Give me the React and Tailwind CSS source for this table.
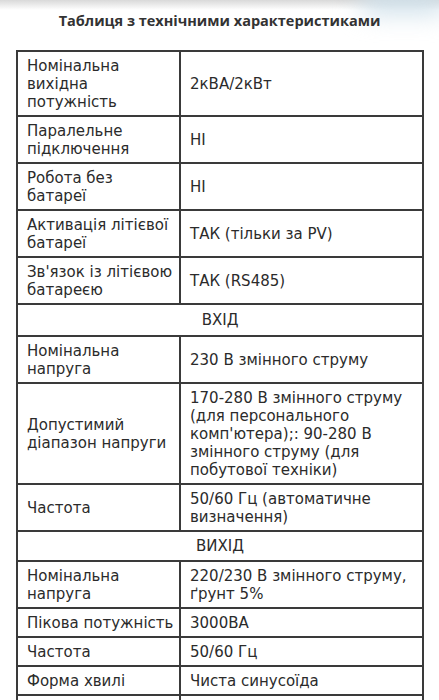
import React from "react";

const topRows = [
  ["Номінальна\nвихідна\nпотужність", "2кВА/2кВт"],
  ["Паралельне\nпідключення", "НІ"],
  ["Робота без\nбатареї", "НІ"],
  ["Активація літієвої\nбатареї", "ТАК (тільки за PV)"],
  ["Зв'язок із літієвою\nбатареєю", "ТАК (RS485)"],
];

const inputRows = [
  ["Номінальна\nнапруга", "230 В змінного струму"],
  [
    "Допустимий\nдіапазон напруги",
    "170-280 В змінного струму (для персонального комп'ютера);: 90-280 В змінного струму (для побутової техніки)",
  ],
  ["Частота", "50/60 Гц (автоматичне визначення)"],
];

const outputRows = [
  ["Номінальна\nнапруга", "220/230 В змінного струму, ґрунт 5%"],
  ["Пікова потужність", "3000ВА"],
  ["Частота", "50/60 Гц"],
  ["Форма хвилі", "Чиста синусоїда"],
  ["Час перемикання", "10 мс"],
];

function Row({ label, value }) {
  return (
    <tr>
      <td className="border-2 border-[#3a3a3a] pl-[9px] pr-[2px] py-[4.5px] align-middle whitespace-pre-line">
        {label}
      </td>
      <td className="border-2 border-[#3a3a3a] pl-[9px] pr-[10px] py-[4.5px] align-middle">
        {value}
      </td>
    </tr>
  );
}

function Section({ title, pad }) {
  return (
    <tr>
      <td
        colSpan={2}
        className={
          pad === "lg"
            ? "border-2 border-[#3a3a3a] py-[6px] text-center"
            : "border-2 border-[#3a3a3a] py-[5px] text-center"
        }
      >
        {title}
      </td>
    </tr>
  );
}

export default function App() {
  return (
    <div className="relative w-[439px] h-[700px] overflow-hidden bg-white text-[#2b2b2b]">
      <div className="absolute top-0 left-0 right-0 h-[10px] bg-gradient-to-b from-[#d9d9d9] to-white"></div>
      <div className="absolute -top-[14px] right-[-10px] w-[90px] h-[28px] rounded-full bg-[#cfe0ea] blur-md"></div>

      <h2 className="relative pt-[11px] text-center text-[14.5px] leading-[20px] font-bold text-[#333] font-['Open_Sans',sans-serif]">
        Таблиця з технічними характеристиками
      </h2>

      <table className="mt-[19px] ml-[16px] w-[408px] border-collapse table-fixed text-[15px] leading-[18px] font-['DejaVu_Sans',sans-serif]">
        <colgroup>
          <col className="w-[163px]" />
          <col />
        </colgroup>
        <tbody>
          {topRows.map(([l, v], i) => (
            <Row key={"t" + i} label={l} value={v} />
          ))}
          <Section title="ВХІД" pad="lg" />
          {inputRows.map(([l, v], i) => (
            <Row key={"i" + i} label={l} value={v} />
          ))}
          <Section title="ВИХІД" />
          {outputRows.map(([l, v], i) => (
            <Row key={"o" + i} label={l} value={v} />
          ))}
        </tbody>
      </table>
    </div>
  );
}
